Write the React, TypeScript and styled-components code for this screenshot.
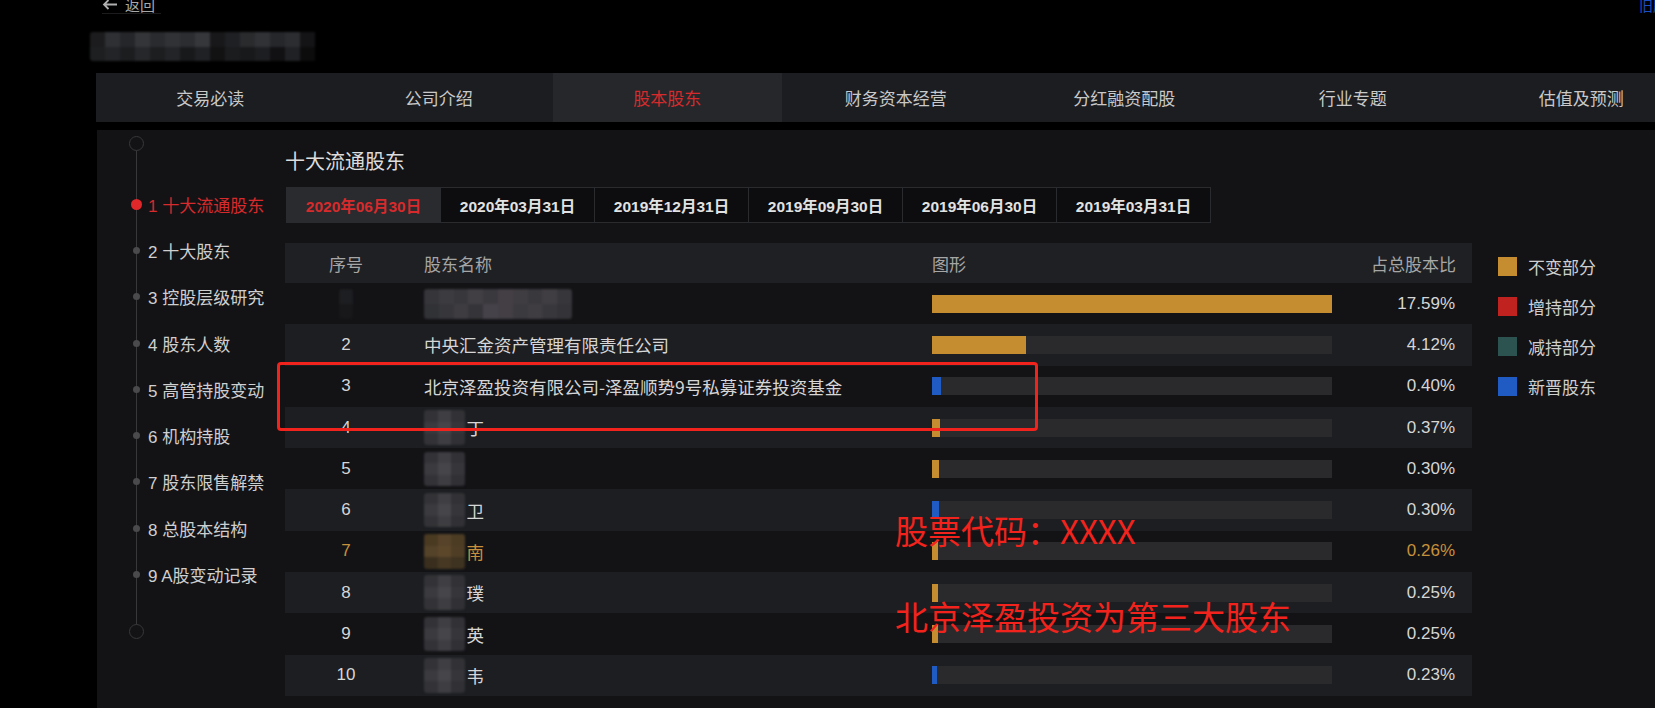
import React from "react";
import styled, { createGlobalStyle } from "styled-components";

const GlobalStyle = createGlobalStyle`
  html, body {
    margin: 0;
    padding: 0;
    background: #000;
  }
  body {
    width: 1655px;
    height: 708px;
    overflow: hidden;
    font-family: "Liberation Sans", "Noto Sans CJK SC", sans-serif;
  }
`;

const CJK = `"Noto Sans CJK SC", "Liberation Sans", sans-serif`;
const NUM = `"Liberation Sans", "Noto Sans CJK SC", sans-serif`;

const RED = "#d62a2c";
const GOLD = "#c68c30";
const BLUE = "#1f5bc2";

const Page = styled.div`
  position: relative;
  width: 1655px;
  height: 708px;
  overflow: hidden;
  background: #000;
`;

const TopBar = styled.div`
  height: 14px;
  display: flex;
  justify-content: space-between;
  align-items: flex-end;
  padding-left: 102px;
`;

const BackLink = styled.a`
  display: flex;
  align-items: center;
  gap: 7px;
  font-family: ${CJK};
  font-size: 15px;
  line-height: 17px;
  color: #a8a8a8;
  border-bottom: 1px solid #1c1c1c;
  padding-right: 6px;
`;

const OldVersion = styled.a`
  font-family: ${CJK};
  font-size: 14px;
  line-height: 17px;
  color: #1d4fc4;
  margin-right: -12px;
`;

const TitleRow = styled.div`
  height: 59px;
  padding: 18px 0 0 90px;
  box-sizing: border-box;
`;

const MosaicGrid = styled.div<{ $cols: number; $cell: number; $row: number }>`
  display: grid;
  grid-template-columns: repeat(${(p) => p.$cols}, ${(p) => p.$cell}px);
  grid-auto-rows: ${(p) => p.$row}px;
  filter: blur(1.2px);
  border-radius: 3px;
  overflow: hidden;
  flex: none;
`;

const MosaicCell = styled.span<{ $c: string }>`
  background: ${(p) => p.$c};
`;

const Container = styled.div`
  margin-left: 96px;
  width: 1600px;
`;

const Nav = styled.div`
  display: flex;
  height: 49px;
  background: #1c1d20;
`;

const NavTab = styled.div<{ $active?: boolean }>`
  flex: 0 0 228.5px;
  display: flex;
  align-items: center;
  justify-content: center;
  font-family: ${CJK};
  font-size: 17px;
  color: ${(p) => (p.$active ? RED : "#c9c9c9")};
  background: ${(p) => (p.$active ? "#26272a" : "transparent")};
`;

const Panel = styled.div`
  margin-top: 8px;
  margin-left: 1px;
  height: 600px;
  background: #131316;
  display: flex;
`;

const Sidebar = styled.div`
  position: relative;
  width: 188px;
  flex: none;
  padding: 5.5px 0 0 29px;
  box-sizing: border-box;
  &::before {
    content: "";
    position: absolute;
    left: 38.5px;
    top: 20px;
    height: 476px;
    width: 1px;
    background: #38383b;
  }
`;

const Cap = styled.div<{ $gap: number }>`
  position: relative;
  width: 15px;
  height: 15px;
  margin: 0 0 0 2.5px;
  margin-top: ${(p) => p.$gap}px;
  box-sizing: border-box;
  border: 1.5px solid #38383b;
  border-radius: 50%;
  background: #131316;
`;

const SideList = styled.div`
  margin-top: 30.5px;
  display: flex;
  flex-direction: column;
`;

const SideItem = styled.div<{ $active?: boolean }>`
  position: relative;
  height: 46.3px;
  display: flex;
  align-items: center;
  gap: 2px;
  font-family: ${NUM};
  font-size: 17px;
  color: ${(p) => (p.$active ? RED : "#cfcfcf")};
  white-space: nowrap;
`;

const DotCol = styled.div`
  width: 20px;
  display: flex;
  justify-content: center;
`;

const Dot = styled.span<{ $active?: boolean }>`
  width: ${(p) => (p.$active ? 11 : 7)}px;
  height: ${(p) => (p.$active ? 11 : 7)}px;
  border-radius: 50%;
  background: ${(p) => (p.$active ? "#e0282b" : "#4a4a4d")};
`;

const Main = styled.div`
  flex: 1;
  padding-top: 17px;
  display: flex;
  flex-direction: column;
`;

const SectionTitle = styled.div`
  font-family: ${CJK};
  font-size: 20px;
  line-height: 28px;
  color: #dcdcdc;
  margin-bottom: 12px;
`;

const DateTabs = styled.div`
  display: flex;
  align-self: flex-start;
  border: 1px solid #2a2b2e;
  margin-left: 1px;
`;

const DateTab = styled.div<{ $active?: boolean }>`
  width: 153px;
  height: 34px;
  display: flex;
  align-items: center;
  justify-content: center;
  font-family: ${NUM};
  font-weight: 700;
  font-size: 15.5px;
  color: ${(p) => (p.$active ? RED : "#e2e2e2")};
  background: ${(p) => (p.$active ? "#2a2b2e" : "#0d0d0f")};
  & + & {
    border-left: 1px solid #2a2b2e;
  }
`;

const TableRow = styled.div`
  display: flex;
  margin-top: 20px;
`;

const Table = styled.div`
  width: 1187px;
  flex: none;
`;

const Row = styled.div<{ $head?: boolean; $stripe?: boolean; $hl?: boolean }>`
  display: grid;
  grid-template-columns: 122px 525px 400px 1fr;
  align-items: center;
  height: ${(p) => (p.$head ? "40px" : "41.3px")};
  background: ${(p) =>
    p.$head ? "#1f2023" : p.$stripe ? "#1d1e21" : "transparent"};
  color: ${(p) => (p.$head ? "#a6a6a6" : p.$hl ? "#c8903a" : "#d6d6d6")};
`;

const SeqCell = styled.div`
  display: flex;
  justify-content: center;
  font-family: ${NUM};
  font-size: 17px;
`;

const HeadCell = styled.div<{ $align?: "left" | "center" | "right"; $pad?: string }>`
  font-family: ${CJK};
  font-size: 17px;
  text-align: ${(p) => p.$align || "left"};
  padding: ${(p) => p.$pad || "0"};
`;

const NameCell = styled.div`
  display: flex;
  align-items: center;
  gap: 2px;
  padding-left: 17px;
  font-family: ${CJK};
  font-size: 17.5px;
  white-space: nowrap;
`;

const BarTrack = styled.div`
  height: 18px;
  background: #2a2a2c;
  display: flex;
`;

const BarFill = styled.div<{ $color: string }>`
  height: 100%;
  background: ${(p) => p.$color};
`;

const PctCell = styled.div`
  text-align: right;
  padding-right: 17px;
  font-family: ${NUM};
  font-size: 17px;
`;

const Legend = styled.div`
  margin-left: 26px;
  padding-top: 3px;
  display: flex;
  flex-direction: column;
`;

const LegendItem = styled.div`
  height: 40px;
  display: flex;
  align-items: center;
  gap: 11px;
  font-family: ${CJK};
  font-size: 17px;
  color: #cfcfcf;
`;

const Swatch = styled.span<{ $color: string }>`
  width: 19px;
  height: 19px;
  background: ${(p) => p.$color};
`;

const Highlight = styled.div`
  position: absolute;
  left: 277px;
  top: 362px;
  width: 761px;
  height: 69px;
  box-sizing: border-box;
  border: 3px solid #f2231c;
  border-radius: 4px;
`;

const Note = styled.div<{ $top: number }>`
  position: absolute;
  left: 895px;
  top: ${(p) => p.$top}px;
  font-family: ${CJK};
  font-size: 33px;
  line-height: 40px;
  color: #f2231c;
  white-space: nowrap;
`;

const Mosaic: React.FC<{ cols: number; cell: number; row: number; colors: string[] }> = ({
  cols,
  cell,
  row,
  colors,
}) => (
  <MosaicGrid $cols={cols} $cell={cell} $row={row}>
    {colors.map((c, i) => (
      <MosaicCell key={i} $c={c} />
    ))}
  </MosaicGrid>
);

const titleShades = [
  "#1c1c1e", "#2e3034", "#25262a", "#333538", "#2a2b2e", "#303235", "#2c2d31", "#35373a",
  "#18181a", "#1f2023", "#2a2b2d", "#303236", "#26272b", "#2b2d30", "#141416",
  "#1e1f21", "#232427", "#1c1d1f", "#26272a", "#1d1e20", "#232427", "#18191b", "#202124",
  "#121213", "#1b1c1e", "#18191b", "#1d1e21", "#111113", "#202124", "#0c0c0d",
];

const firstName = [
  "#36363a", "#3c3b40", "#38383c", "#423f44", "#3a393e", "#443f45", "#403d42", "#39383d", "#413e43", "#37373b",
  "#313236", "#37373b", "#3e3c41", "#353539", "#46424a", "#433f45", "#3b3a3f", "#403d42", "#38383c", "#343438",
];

const grey = ["#333337", "#3e3e43", "#323236", "#3a3a3f", "#45454a", "#35353a", "#333337", "#3e3e42", "#303035"];
const brown = ["#4a3a22", "#57432a", "#4c3c24", "#544229", "#5c472b", "#4f3e25", "#3a2f1e", "#463823", "#3e3220"];

type Holder = { seq: string; last: string; pct: number; color: string; mosaic?: string[] };

const holders: Holder[] = [
  { seq: "", last: "", pct: 17.59, color: GOLD },
  { seq: "2", last: "中央汇金资产管理有限责任公司", pct: 4.12, color: GOLD },
  { seq: "3", last: "北京泽盈投资有限公司-泽盈顺势9号私募证券投资基金", pct: 0.4, color: BLUE },
  { seq: "4", last: "丁", pct: 0.37, color: GOLD, mosaic: grey },
  { seq: "5", last: "", pct: 0.3, color: GOLD, mosaic: grey },
  { seq: "6", last: "卫", pct: 0.3, color: BLUE, mosaic: grey },
  { seq: "7", last: "南", pct: 0.26, color: GOLD, mosaic: brown },
  { seq: "8", last: "璞", pct: 0.25, color: GOLD, mosaic: grey },
  { seq: "9", last: "英", pct: 0.25, color: GOLD, mosaic: grey },
  { seq: "10", last: "韦", pct: 0.23, color: BLUE, mosaic: grey },
];

const navTabs = ["交易必读", "公司介绍", "股本股东", "财务资本经营", "分红融资配股", "行业专题", "估值及预测"];
const sideItems = [
  "1 十大流通股东",
  "2 十大股东",
  "3 控股层级研究",
  "4 股东人数",
  "5 高管持股变动",
  "6 机构持股",
  "7 股东限售解禁",
  "8 总股本结构",
  "9 A股变动记录",
];
const dates = ["2020年06月30日", "2020年03月31日", "2019年12月31日", "2019年09月30日", "2019年06月30日", "2019年03月31日"];
const legend = [
  { label: "不变部分", color: GOLD },
  { label: "增持部分", color: "#c0221f" },
  { label: "减持部分", color: "#2d5351" },
  { label: "新晋股东", color: BLUE },
];

const MAX = 17.59;

const App: React.FC = () => (
  <Page>
    <GlobalStyle />
    <TopBar>
      <BackLink>
        <svg width="16" height="11" viewBox="0 0 16 11" fill="none" stroke="#b0b0b0" strokeWidth="1.8">
          <path d="M15 5.5H2M6.5 1L2 5.5L6.5 10" />
        </svg>
        返回
      </BackLink>
      <OldVersion>旧版</OldVersion>
    </TopBar>
    <TitleRow>
      <Mosaic cols={15} cell={15} row={14.5} colors={titleShades} />
    </TitleRow>
    <Container>
      <Nav>
        {navTabs.map((t, i) => (
          <NavTab key={t} $active={i === 2}>
            {t}
          </NavTab>
        ))}
      </Nav>
      <Panel>
        <Sidebar>
          <Cap $gap={0} />
          <SideList>
            {sideItems.map((s, i) => (
              <SideItem key={s} $active={i === 0}>
                <DotCol>
                  <Dot $active={i === 0} />
                </DotCol>
                {s}
              </SideItem>
            ))}
          </SideList>
          <Cap $gap={26.8} />
        </Sidebar>
        <Main>
          <SectionTitle>十大流通股东</SectionTitle>
          <DateTabs>
            {dates.map((d, i) => (
              <DateTab key={d} $active={i === 0}>
                {d}
              </DateTab>
            ))}
          </DateTabs>
          <TableRow>
            <Table>
              <Row $head>
                <HeadCell $align="center">序号</HeadCell>
                <HeadCell $pad="0 0 0 17px">股东名称</HeadCell>
                <HeadCell>图形</HeadCell>
                <HeadCell $align="right" $pad="0 16px 0 0">
                  占总股本比
                </HeadCell>
              </Row>
              {holders.map((h, i) => (
                <Row key={i} $stripe={i % 2 === 1} $hl={h.seq === "7"}>
                  <SeqCell>
                    {i === 0 ? (
                      <Mosaic cols={1} cell={14} row={15} colors={["#1d1e21", "#18181b"]} />
                    ) : (
                      h.seq
                    )}
                  </SeqCell>
                  <NameCell>
                    {i === 0 && <Mosaic cols={10} cell={14.8} row={15} colors={firstName} />}
                    {h.mosaic && <Mosaic cols={3} cell={13.5} row={11.5} colors={h.mosaic} />}
                    {h.last}
                  </NameCell>
                  <BarTrack>
                    <BarFill $color={h.color} style={{ width: `${(h.pct / MAX) * 400}px` }} />
                  </BarTrack>
                  <PctCell>{h.pct.toFixed(2)}%</PctCell>
                </Row>
              ))}
            </Table>
            <Legend>
              {legend.map((l) => (
                <LegendItem key={l.label}>
                  <Swatch $color={l.color} />
                  {l.label}
                </LegendItem>
              ))}
            </Legend>
          </TableRow>
        </Main>
      </Panel>
    </Container>
    <Highlight />
    <Note $top={510}>股票代码：XXXX</Note>
    <Note $top={596}>北京泽盈投资为第三大股东</Note>
  </Page>
);

export default App;
